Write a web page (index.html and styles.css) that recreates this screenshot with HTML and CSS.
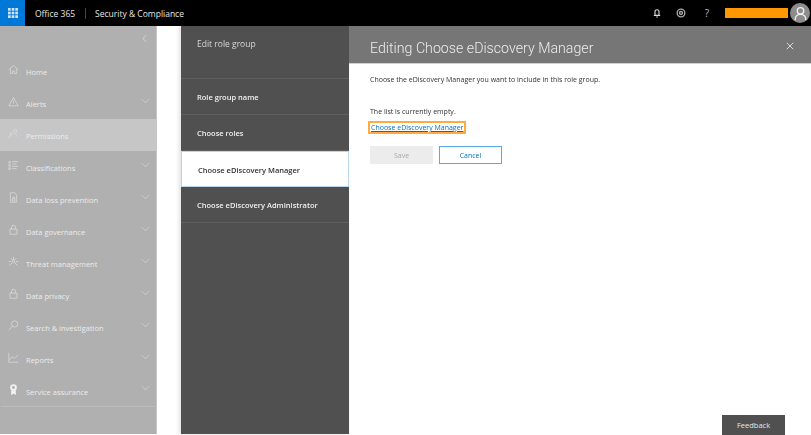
FILE: index.html
```html
<!DOCTYPE html>
<html lang="en">
<head>
    <meta charset="UTF-8">
    <title>Security &amp; Compliance</title>
    <link rel="stylesheet" href="styles.css">
</head>
<body>
    <div class="topbar">
        <div class="waffle">
            <svg width="10" height="10" viewBox="0 0 11 11" fill="#cfe4f7">
                <rect x="0" y="0" width="3" height="3"/><rect x="4" y="0" width="3" height="3"/><rect x="8" y="0" width="3" height="3"/>
                <rect x="0" y="4" width="3" height="3"/><rect x="4" y="4" width="3" height="3"/><rect x="8" y="4" width="3" height="3"/>
                <rect x="0" y="8" width="3" height="3"/><rect x="4" y="8" width="3" height="3"/><rect x="8" y="8" width="3" height="3"/>
            </svg>
        </div>
        <span class="brand">Office 365</span>
        <span class="app-name">Security &amp; Compliance</span>
        <div class="top-icons">
            <svg class="bell" width="8" height="10" viewBox="0 0 10 12" fill="none" stroke="#ddd" stroke-width="1.4">
                <path d="M2.500 9V4.500a2.500 2.500 0 0 1 5 0V9zM1 9.200h8M4 11h2"/>
            </svg>
            <svg width="10" height="10" viewBox="0 0 12 12" fill="none" stroke="#aaa" stroke-width="1.600">
                <circle cx="6" cy="6" r="4.600"/><circle cx="6" cy="6" r="1.800"/>
            </svg>
            <span class="help">?</span>
            <div class="user-bar"></div>
            <div class="avatar">
                <svg width="17" height="17" viewBox="0 0 19 19" fill="none" stroke="#eee" stroke-width="1.600">
                    <circle cx="9.500" cy="6.500" r="3.600"/><path d="M3.500 17c0-4 2.500-6.500 6-6.500s6 2.500 6 6.500"/>
                </svg>
            </div>
        </div>
    </div>

    <div class="main">
        <div class="nav">
            <div class="collapse">
                <svg width="5" height="9" viewBox="0 0 6 10" fill="none" stroke="#ddd"><path d="M5 1 1 5l4 4"/></svg>
            </div>
            <div class="nav-item">
                <svg class="nav-icon" viewBox="0 0 14 14"><path d="M1 7 7 2l6 5M3 6v6h3V9h2v3h3V6"/></svg>
                <span class="nav-text">Home</span>
            </div>
            <div class="nav-item">
                <svg class="nav-icon" viewBox="0 0 14 14"><path d="M7 2 1 12.500h12zM7 6v3.500"/></svg>
                <span class="nav-text">Alerts</span>
                <svg class="chev" viewBox="0 0 10 6"><path d="m1 1 4 4 4-4"/></svg>
            </div>
            <div class="nav-item active">
                <svg class="nav-icon" viewBox="0 0 14 14"><circle cx="9" cy="4" r="2"/><circle cx="4" cy="7.500" r="1.600"/><path d="M1 13c0-2 1-3 3-3M8 8c2 0 4 1 4 3"/></svg>
                <span class="nav-text">Permissions</span>
            </div>
            <div class="nav-item">
                <svg class="nav-icon" viewBox="0 0 14 14"><path d="M1 2h2v2H1zM1 6h2v2H1zM1 10h2v2H1zM5 2h8M5 5h6M5 8h8M5 11h6"/></svg>
                <span class="nav-text">Classifications</span>
                <svg class="chev" viewBox="0 0 10 6"><path d="m1 1 4 4 4-4"/></svg>
            </div>
            <div class="nav-item">
                <svg class="nav-icon" viewBox="0 0 14 14"><path d="M9 1H3v12h8V4zM5.500 8.500h3.500v3H5.500zM6 8.500V7.500a1.200 1.200 0 0 1 2.500 0v1"/></svg>
                <span class="nav-text">Data loss prevention</span>
                <svg class="chev" viewBox="0 0 10 6"><path d="m1 1 4 4 4-4"/></svg>
            </div>
            <div class="nav-item">
                <svg class="nav-icon" viewBox="0 0 14 14"><path d="M2.500 6.500h9v6.500h-9zM4.500 6.500V4a2.500 2.500 0 0 1 5 0v2.500"/></svg>
                <span class="nav-text">Data governance</span>
                <svg class="chev" viewBox="0 0 10 6"><path d="m1 1 4 4 4-4"/></svg>
            </div>
            <div class="nav-item">
                <svg class="nav-icon" viewBox="0 0 14 14"><circle cx="7" cy="7" r="1.500"/><path d="M7 1v4M2 12l3.500-3.500M12 12 8.500 8.500M1 7h3M10 7h3M4 3l2 2.500M10 3 8 5.500"/></svg>
                <span class="nav-text">Threat management</span>
                <svg class="chev" viewBox="0 0 10 6"><path d="m1 1 4 4 4-4"/></svg>
            </div>
            <div class="nav-item">
                <svg class="nav-icon" viewBox="0 0 14 14"><path d="M2.500 6.500h9v6.500h-9zM4.500 6.500V4a2.500 2.500 0 0 1 5 0v2.500"/></svg>
                <span class="nav-text">Data privacy</span>
                <svg class="chev" viewBox="0 0 10 6"><path d="m1 1 4 4 4-4"/></svg>
            </div>
            <div class="nav-item">
                <svg class="nav-icon" viewBox="0 0 14 14"><circle cx="8.500" cy="5" r="4"/><path d="M5.500 8 1 13"/></svg>
                <span class="nav-text">Search &amp; investigation</span>
                <svg class="chev" viewBox="0 0 10 6"><path d="m1 1 4 4 4-4"/></svg>
            </div>
            <div class="nav-item">
                <svg class="nav-icon" viewBox="0 0 14 14"><path d="M1 1v12h12M2 10l3-4 3 2 5-4"/></svg>
                <span class="nav-text">Reports</span>
                <svg class="chev" viewBox="0 0 10 6"><path d="m1 1 4 4 4-4"/></svg>
            </div>
            <div class="nav-item last">
                <svg class="nav-icon medal" viewBox="0 0 14 14"><path d="M4 8h6v6l-3-1.500L4 14z"/><circle cx="7" cy="4.500" r="4.200"/><circle class="medal-hole" cx="7" cy="4.500" r="1.800"/></svg>
                <span class="nav-text">Service assurance</span>
                <svg class="chev" viewBox="0 0 10 6"><path d="m1 1 4 4 4-4"/></svg>
            </div>
        </div>

        <div class="page-gap"></div>

        <div class="steps">
            <div class="steps-title">Edit role group</div>
            <div class="step">Role group name</div>
            <div class="step">Choose roles</div>
            <div class="step selected">Choose eDiscovery Manager</div>
            <div class="step">Choose eDiscovery Administrator</div>
        </div>

        <div class="editor">
            <div class="editor-head">
                <h1>Editing Choose eDiscovery Manager</h1>
                <svg class="close" width="8" height="8" viewBox="0 0 10 10" stroke="#ddd" stroke-width="1.200"><path d="m1 1 8 8M9 1 1 9"/></svg>
            </div>
            <div class="editor-body">
                <p class="intro">Choose the eDiscovery Manager you want to include in this role group.</p>
                <p class="empty">The list is currently empty.</p>
                <a class="pick-link">Choose eDiscovery Manager</a>
                <div class="buttons">
                    <button class="btn btn-save">Save</button>
                    <button class="btn btn-cancel">Cancel</button>
                </div>
                <button class="feedback">Feedback</button>
            </div>
        </div>
    </div>
</body>
</html>
```

FILE: styles.css
```css
* {
    box-sizing: border-box;
    margin: 0;
    padding: 0;
}

html, body {
    height: 100%;
    overflow: hidden;
}

body {
    font-family: "Open Sans", "Noto Sans", sans-serif;
    font-size: 7.5px;
    color: #333;
    background: white;
    filter: blur(0.7px);
}

.topbar {
    display: flex;
    align-items: center;
    height: 26px;
    background: black;
    color: #e6e6e6;
    font-size: 8.5px;
}

.waffle {
    display: flex;
    align-items: center;
    justify-content: center;
    width: 25px;
    height: 26px;
    background: #0078d7;
}

.brand {
    padding: 0 10px;
}

.app-name {
    border-left: 1px solid #444;
    padding-left: 9px;
}

.top-icons {
    display: flex;
    align-items: center;
    margin-left: auto;
}

.bell {
    margin-right: 15px;
}

.help {
    margin: 0 16px 0 19px;
    font-size: 10px;
    color: #bbb;
}

.user-bar {
    width: 63px;
    height: 10px;
    background: #ff9800;
}

.avatar {
    display: flex;
    align-items: center;
    justify-content: center;
    width: 20px;
    height: 20px;
    margin: 0 1px 0 2px;
    border-radius: 50%;
    overflow: hidden;
    background: #8c8c8c;
}

.main {
    display: flex;
    height: 409px;
}

/* left nav, dimmed */
.nav {
    width: 157px;
    margin-bottom: 1px;
    padding-top: 1px;
    background: #b0b0b0;
    border-right: 1px solid #c4c4c4;
}

.collapse {
    display: flex;
    justify-content: flex-end;
    height: 28px;
    padding: 7px 9px 0 0;
}

.nav-item {
    display: flex;
    align-items: center;
    height: 32px;
    padding: 0 6px 0 8px;
    color: #ececec;
}

.nav-item.active {
    background: #c6c6c6;
}

.nav-item.last {
    margin: 0 1px;
    padding: 0 5px 0 7px;
    border-bottom: 1px solid #bcbcbc;
}

.nav-icon {
    width: 11px;
    height: 11px;
    margin: 0 7px 3px 0;
    fill: none;
    stroke: #dedede;
    stroke-width: 0.9;
}

.nav-icon.medal {
    fill: #f2f2f2;
    stroke: none;
}

.medal-hole {
    fill: #b0b0b0;
}

.nav-text {
    flex: 1;
    padding-top: 2px;
}

.chev {
    width: 9px;
    height: 6px;
    margin-bottom: 5px;
    fill: none;
    stroke: #cfcfcf;
}

.page-gap {
    width: 24px;
}

.steps {
    width: 168px;
    margin-bottom: 1px;
    background: #505050;
    color: #f0f0f0;
    box-shadow: -2px 0 4px rgba(0,0,0,0.12);
}

.steps-title {
    height: 53px;
    padding: 12px 16px 0;
    font-size: 8.5px;
    color: #d8d8d8;
    border-bottom: 1px solid #5f5f5f;
}

.step {
    display: flex;
    align-items: center;
    height: 36px;
    padding: 1px 0 0 16px;
    font-weight: 600;
    border-bottom: 1px solid #5f5f5f;
}

.step.selected {
    background: white;
    color: #333;
    border: 1px solid #b9d6ee;
}

.editor {
    flex: 1;
    display: flex;
    flex-direction: column;
}

.editor-head {
    display: flex;
    align-items: center;
    justify-content: space-between;
    height: 38px;
    padding: 7px 17px 0 21px;
    background: #767676;
    border-bottom: 1px solid #d0d0d0;
}

.editor-head h1 {
    font-family: Roboto, sans-serif;
    font-size: 14.2px;
    font-weight: 300;
    color: #ececec;
}

.close {
    margin-bottom: 4px;
}

.editor-body {
    position: relative;
    flex: 1;
    padding: 11px 21px 0;
    font-size: 7px;
}

.intro {
    margin-bottom: 23px;
}

.empty {
    margin-bottom: 7px;
}

.pick-link {
    display: inline-block;
    padding: 0 1px;
    color: #0072c6;
    text-decoration: underline;
    outline: 2px solid #ffab40;
    line-height: 9px;
}

.buttons {
    display: flex;
    gap: 6px;
    margin-top: 14px;
}

.btn {
    width: 63px;
    height: 18px;
    font-family: inherit;
    font-size: 7px;
}

.btn-save {
    background: #ececec;
    border: none;
    color: #aaa;
}

.btn-cancel {
    background: white;
    border: 1px solid #5aa9e0;
    color: #0072c6;
}

/* stays in the bottom corner of the panel */
.feedback {
    position: absolute;
    right: 26px;
    bottom: 0;
    width: 63px;
    height: 20px;
    background: #505050;
    border: none;
    font-family: inherit;
    font-size: 7.5px;
    color: #e6e6e6;
}
```
